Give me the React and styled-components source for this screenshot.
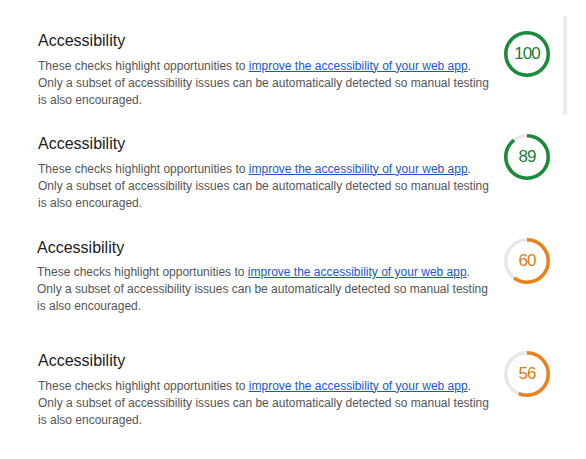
import React from "react";
import styled, { createGlobalStyle } from "styled-components";

const GlobalStyle = createGlobalStyle`
  body {
    margin: 0;
    background: #fff;
    font-family: "Liberation Sans", Arial, sans-serif;
  }
`;

const Page = styled.div`
  position: relative;
  width: 586px;
  height: 459px;
  padding: 31px 0 0 38px;
  box-sizing: border-box;
  display: flex;
  flex-direction: column;
  overflow: hidden;
`;

const ScrollThumb = styled.div`
  position: absolute;
  left: 563px;
  top: 16px;
  width: 4px;
  height: 99px;
  background: #ececec;
`;

const Section = styled.section`
  display: flex;
  align-items: flex-start;
  gap: 10px;
  margin-bottom: ${({ $space }) => $space}px;
  margin-left: ${({ $shift }) => $shift || 0}px;
`;

const Content = styled.div`
  width: 456px;
  display: flex;
  flex-direction: column;
  gap: 6.5px;
`;

const Title = styled.h2`
  margin: 0;
  font-size: 16px;
  line-height: 20px;
  font-weight: 400;
  color: #212121;
`;

const Description = styled.p`
  margin: 0;
  font-size: 12px;
  line-height: 17px;
  color: #555;
`;

const Link = styled.a`
  color: #1a57d0;
  text-decoration: underline;
`;

const GaugeWrap = styled.div`
  position: relative;
  width: 46px;
  height: 46px;
  margin-left: ${({ $shift }) => -($shift || 0)}px;
  flex-shrink: 0;
`;

const GaugeValue = styled.span`
  position: absolute;
  inset: 0;
  display: flex;
  align-items: center;
  justify-content: center;
  font-size: 17px;
  letter-spacing: -1px;
  color: ${({ $color }) => $color};
`;

const palette = {
  pass: { ring: "#1a8a3c", text: "#188038" },
  average: { ring: "#e8821e", text: "#e37a12" },
};

const Gauge = ({ score, shift }) => {
  const tone = score >= 80 ? palette.pass : palette.average;
  const r = 21.25;
  const c = 2 * Math.PI * r;
  return (
    <GaugeWrap $shift={shift}>
      <svg width="46" height="46" viewBox="0 0 46 46">
        <circle cx="23" cy="23" r={r} fill="none" stroke="#e8e8e8" strokeWidth="3.5" />
        <circle
          cx="23"
          cy="23"
          r={r}
          fill="none"
          stroke={tone.ring}
          strokeWidth="3.5"
          strokeDasharray={`${(c * score) / 100} ${c}`}
          transform="rotate(-90 23 23)"
        />
      </svg>
      <GaugeValue $color={tone.text}>{score}</GaugeValue>
    </GaugeWrap>
  );
};

const audits = [
  { score: 100, space: 25.5 },
  { score: 89, space: 26 },
  { score: 60, space: 36, shift: -1 },
  { score: 56, space: 0 },
];

const App = () => (
  <>
    <GlobalStyle />
    <Page>
      <ScrollThumb />
      {audits.map((a, i) => (
        <Section key={i} $space={a.space} $shift={a.shift}>
          <Content>
            <Title>Accessibility</Title>
            <Description>
              These checks highlight opportunities to{" "}
              <Link href="#">improve the accessibility of your web app</Link>.
              Only a subset of accessibility issues can be automatically
              detected so manual testing is also encouraged.
            </Description>
          </Content>
          <Gauge score={a.score} shift={a.shift} />
        </Section>
      ))}
    </Page>
  </>
);

export default App;
